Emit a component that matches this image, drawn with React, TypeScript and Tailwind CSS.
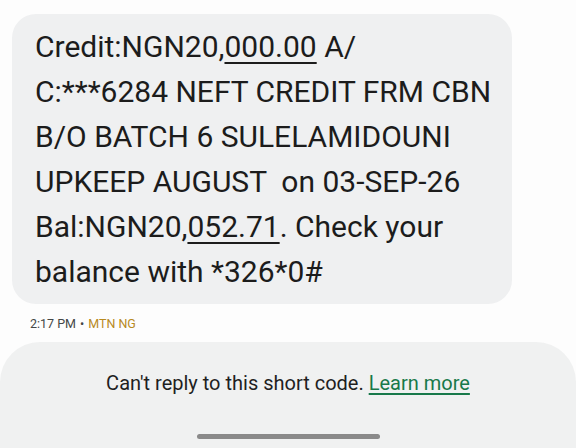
export default function App() {
  return (
    <div
      className="w-[576px] h-[448px] bg-[#fdfdfd] flex flex-col overflow-hidden"
      style={{ fontFamily: "Roboto, 'Noto Sans', sans-serif" }}
    >
      <div className="pl-3 pt-[14px]">
        <div className="w-[500px] rounded-[24px] bg-[#eff0f1] pl-[23px] pr-2 py-[10px] text-[30px] leading-[45px] text-[#1c1c1c] whitespace-nowrap">
          Credit:NGN20,<span className="underline decoration-2 underline-offset-[5px]">000.00</span> A/
          <br />
          C:***6284 NEFT CREDIT FRM CBN
          <br />
          B/O BATCH 6 SULELAMIDOUNI
          <br />
          <span className="whitespace-pre">UPKEEP AUGUST  on 03-SEP-26</span>
          <br />
          Bal:NGN20,<span className="underline decoration-2 underline-offset-[5px]">052.71</span>. Check your
          <br />
          balance with *326*0#
        </div>
      </div>
      <div className="pl-[30px] mt-[11px] text-[12.5px] text-[#444746] flex items-center gap-1">
        <span>2:17 PM</span>
        <span>•</span>
        <span className="text-[#b88a1e]">MTN NG</span>
      </div>
      <div className="mt-[8px] flex-1 bg-[#f0f1f1] rounded-t-[40px] flex flex-col items-center">
        <div className="mt-[27px] text-[20px] leading-[28px] text-[#1f1f1f]">
          Can't reply to this short code.{" "}
          <span className="text-[#18794a] underline decoration-[1.5px] underline-offset-[3px]">Learn more</span>
        </div>
        <div className="mt-auto mb-[9px] w-[183px] h-[5px] rounded-full bg-[#8a8a8a]" />
      </div>
    </div>
  );
}
